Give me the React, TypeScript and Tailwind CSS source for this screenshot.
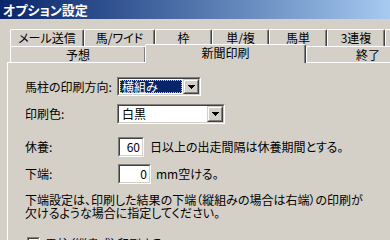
import type { ReactNode } from 'react';

const FONT = "font-['Noto_Sans_CJK_JP',sans-serif] [font-feature-settings:'palt']";

function Sunken({ className, children }: { className: string; children: ReactNode }) {
  return (
    <div className={`border border-t-[#808080] border-l-[#808080] border-r-white border-b-white ${className}`}>
      <div className="h-full flex items-center bg-white border border-t-[#404040] border-l-[#404040] border-r-[#d4d0c8] border-b-[#d4d0c8]">
        {children}
      </div>
    </div>
  );
}

function DropButton() {
  return (
    <div className="h-full w-[16px] border border-t-[#d4d0c8] border-l-[#d4d0c8] border-r-[#404040] border-b-[#404040]">
      <div className="h-full flex items-center justify-center bg-[#d4d0c8] border border-t-white border-l-white border-r-[#808080] border-b-[#808080]">
        <svg width="7" height="4" viewBox="0 0 7 4" shapeRendering="crispEdges">
          <path d="M0 0h7v1h-1v1h-1v1h-1v1h-1v-1h-1v-1h-1v-1h-1z" fill="#000" />
        </svg>
      </div>
    </div>
  );
}

function BackTab({ label, w }: { label: string; w: string }) {
  return (
    <div className={`${w} h-[17px] flex items-center justify-center rounded-t-[2px] border-t border-l border-t-white border-l-white border-r border-r-[#404040] shadow-[inset_-1px_0_0_#808080]`}>
      {label}
    </div>
  );
}

function FrontTab({ label, w, selected }: { label: string; w: string; selected?: boolean }) {
  if (selected) {
    return (
      <div className={`${w} relative z-10 -ml-px -mb-px h-[19px] pb-[2px] flex items-center justify-center bg-[#d4d0c8] rounded-t-[2px] border-t border-l border-t-white border-l-white border-r border-r-[#404040] shadow-[inset_-1px_0_0_#808080]`}>
        {label}
      </div>
    );
  }
  return (
    <div className={`${w} h-[16px] flex items-center justify-center rounded-t-[2px] border-t border-l border-t-white border-l-white border-r border-r-[#404040] shadow-[inset_-1px_0_0_#808080]`}>
      {label}
    </div>
  );
}

export default function App() {
  return (
    <div className={`w-[390px] h-[240px] overflow-hidden bg-[#d4d0c8] text-[12px] leading-none text-black ${FONT}`}>
      {/* title bar */}
      <div className="h-[19px] flex items-center pl-[3px] bg-gradient-to-r from-[#0a246a] to-[#a6caf0]">
        <span className="text-white font-bold text-[13px]">オプション設定</span>
      </div>

      <div className="pt-[10px] pl-[7px]">
        <div className="ml-[3px] flex">
          <BackTab label="メール送信" w="w-[74px] shrink-0" />
          <BackTab label="馬/ワイド" w="w-[71px] shrink-0" />
          <BackTab label="枠" w="w-[57px] shrink-0" />
          <BackTab label="単/複" w="w-[57px] shrink-0" />
          <BackTab label="馬単" w="w-[58px] shrink-0" />
          <BackTab label="3連複" w="w-[58px] shrink-0" />
          <BackTab label="" w="w-[40px] shrink-0" />
        </div>
        <div className="ml-[3px] flex items-end h-[16px]">
          <FrontTab label="予想" w="w-[136px] shrink-0" />
          <FrontTab label="新聞印刷" w="w-[161px] shrink-0" selected />
          <FrontTab label="終了" w="w-[124px] shrink-0" />
        </div>

        {/* panel */}
        <div className="border-t border-l border-t-white border-l-white pl-[17px] pt-[14px]">
          <div className="flex items-center h-[19px]">
            <span className="w-[92px] shrink-0">馬柱の印刷方向:</span>
            <Sunken className="w-[84px] h-[19px]">
              <div className="flex-1 h-full flex items-center pl-px pr-px">
                <span className="flex-1 h-[13px] flex items-center pl-[2px] bg-[#0a246a] text-white outline outline-1 outline-dotted outline-[#d8c870] -outline-offset-1">横組み</span>
              </div>
              <DropButton />
            </Sunken>
          </div>

          <div className="flex items-center h-[20px] mt-[8px]">
            <span className="w-[92px] shrink-0">印刷色:</span>
            <Sunken className="w-[108px] h-[20px]">
              <span className="flex-1 pl-[3px]">白黒</span>
              <DropButton />
            </Sunken>
          </div>

          <div className="flex items-center h-[20px] mt-[13px]">
            <span className="w-[92px] shrink-0">休養:</span>
            <Sunken className="ml-px w-[26px] h-[20px]">
              <span className="flex-1 text-right pr-[2px]">60</span>
            </Sunken>
            <span className="ml-[6px]">日以上の出走間隔は休養期間とする。</span>
          </div>

          <div className="flex items-center h-[20px] mt-[7px]">
            <span className="w-[92px] shrink-0">下端:</span>
            <Sunken className="ml-px w-[33px] h-[20px]">
              <span className="flex-1 text-right pr-[2px]">0</span>
            </Sunken>
            <span className="ml-[5px]">mm空ける。</span>
          </div>

          <p className="mt-[9px] leading-[13px]">
            下端設定は、印刷した結果の下端（縦組みの場合は右端）の印刷が
            <br />
            欠けるような場合に指定してください。
          </p>

          <div className="flex items-center mt-[18px] ml-[2px]">
            <div className="w-[13px] h-[13px] shrink-0 border border-t-[#808080] border-l-[#808080] border-r-white border-b-white">
              <div className="h-full bg-white border border-t-[#404040] border-l-[#404040] border-r-[#d4d0c8] border-b-[#d4d0c8]" />
            </div>
            <span className="ml-[5px]">馬柱（縦書式）印刷する</span>
          </div>
        </div>
      </div>
    </div>
  );
}
